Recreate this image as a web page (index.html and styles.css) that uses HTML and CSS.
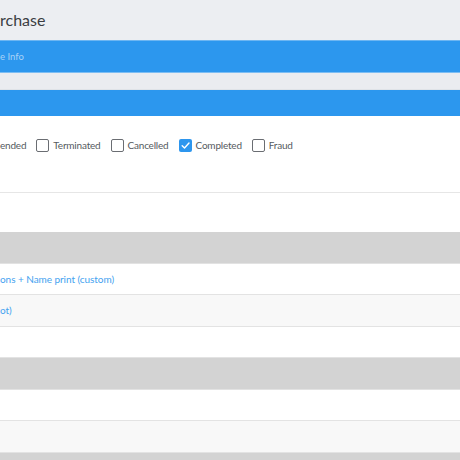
FILE: index.html
```html
<!DOCTYPE html>
<html>
<head>
<meta charset="utf-8">
<link rel="stylesheet" href="styles.css">
</head>
<body>
<div class="page">
  <div class="header"><h1 class="title">rchase</h1></div>
  <div class="bar bar-main"><span class="bar-label">e Info</span></div>
  <div class="spacer"></div>
  <div class="bar bar-second"></div>
  <div class="panel">
    <div class="filters">
      <span class="filter-text">ended</span>
      <label class="filter"><span class="box"></span><span class="filter-text">Terminated</span></label>
      <label class="filter"><span class="box"></span><span class="filter-text">Cancelled</span></label>
      <label class="filter"><span class="box checked"><svg viewBox="0 0 13 13" width="13" height="13"><path d="M3.2 6.8 L5.5 9 L10 4" fill="none" stroke="#fff" stroke-width="1.4" stroke-linecap="round" stroke-linejoin="round"/></svg></span><span class="filter-text">Completed</span></label>
      <label class="filter"><span class="box"></span><span class="filter-text">Fraud</span></label>
    </div>
  </div>
  <div class="blank"></div>
  <div class="thead"></div>
  <div class="row"><a class="link">ons + Name print (custom)</a></div>
  <div class="row alt"><a class="link">ot)</a></div>
  <div class="row"></div>
  <div class="thead"></div>
  <div class="row"></div>
  <div class="row alt"></div>
  <div class="thead"></div>
</div>
</body>
</html>
```
FILE: styles.css
```css
* { box-sizing: border-box; }
html, body { margin: 0; padding: 0; }
body {
  font-family: Lato, "Open Sans", sans-serif;
  background: #ffffff;
  width: 460px;
  height: 460px;
  overflow: hidden;
}
.page { width: 460px; height: 460px; overflow: hidden; }
.header {
  height: 40px;
  background: #eceef2;
  display: flex;
  align-items: center;
}
.title {
  margin: 0;
  font-weight: 400;
  font-size: 16px;
  color: #3a3d42;
  line-height: 40px;
}
.bar {
  background: #2c97ee;
  border-top: 1px solid #6db6f2;
  display: flex;
  align-items: center;
}
.bar-main {
  height: 33px;
  border-bottom: 1px solid #7cbdf3;
}
.bar-label {
  font-size: 9.5px;
  color: #a9d2f6;
}
.spacer {
  height: 16px;
  background: #eaecf0;
}
.bar-second {
  height: 27px;
  border-top: 1px solid #dfe3e8;
}
.panel {
  height: 77px;
  border-bottom: 1px solid #e6e6e6;
  padding-top: 23px;
}
.filters {
  display: flex;
  align-items: center;
  height: 13px;
}
.filter {
  display: flex;
  align-items: center;
  margin-left: 10px;
}
.filter-text {
  font-size: 10px;
  letter-spacing: -0.2px;
  color: #555a60;
  line-height: 13px;
}
.box {
  width: 13px;
  height: 13px;
  border: 1.5px solid #6a6d72;
  border-radius: 2px;
  margin-right: 4px;
  display: inline-block;
  background: #fff;
}
.box.checked {
  background: #2d96ee;
  border: none;
}
.box svg { display: block; }
.blank { height: 39px; }
.thead {
  height: 32px;
  background: #d3d3d3;
  border-bottom: 1px solid #e2e2e2;
}
.row {
  height: 31.34px;
  border-bottom: 1px solid #e3e3e3;
  display: flex;
  align-items: center;
  background: #ffffff;
}
.row.alt { background: #f8f8f8; }
.link {
  font-size: 10px;
  letter-spacing: -0.05px;
  color: #44a2f0;
}
```
